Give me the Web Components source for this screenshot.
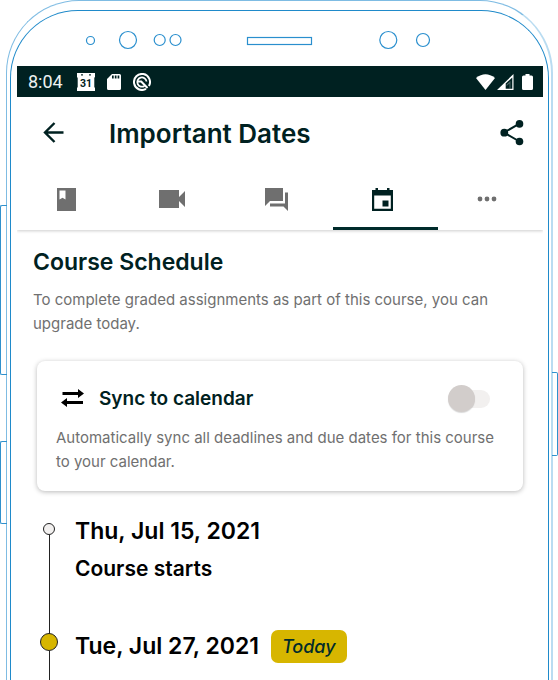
<!DOCTYPE html>
<html lang="en">
<head>
<meta charset="utf-8">
<title>Important Dates</title>
<style>
body { margin: 0; background: #fff; font-family: Inter, "Liberation Sans", sans-serif; color: #002121; overflow: hidden; }
</style>
</head>
<body>
<phone-frame>
  <status-bar></status-bar>
  <app-bar>Important Dates</app-bar>
  <tab-bar></tab-bar>
  <course-intro>
    <span slot="title">Course Schedule</span>
    To complete graded assignments as part of this course, you can upgrade today.
  </course-intro>
  <sync-card>
    <span slot="title">Sync to calendar</span>
    Automatically sync all deadlines and due dates for this course to your calendar.
  </sync-card>
  <date-timeline>
    <date-item>
      <span slot="date">Thu, Jul 15, 2021</span>
      Course starts
    </date-item>
    <date-item today>
      <span slot="date">Tue, Jul 27, 2021</span>
    </date-item>
  </date-timeline>
</phone-frame>

<script>
const define = (name, html) => {
  const template = document.createElement('template');
  template.innerHTML = html;
  customElements.define(name, class extends HTMLElement {
    constructor() {
      super();
      this.attachShadow({ mode: 'open' }).append(template.content.cloneNode(true));
    }
  });
};

define('phone-frame', `
<style>
:host { display: block; position: relative; padding: 0 5px 0 6px; height: 100vh; overflow: hidden; box-sizing: border-box; }
.outer { box-sizing: border-box; height: 100%; border: 1px solid #7fbce3; border-right: 2px solid #b9dcf1; border-bottom: 0; border-radius: 73px 73px 0 0; padding: 9px 2px 0 3px; }
.inner { box-sizing: border-box; height: 100%; border: 1px solid #1f8aca; border-bottom: 0; border-radius: 68px 68px 0 0; padding: 0 5px 0 6px; display: flex; flex-direction: column; }
.bezel { display: block; width: 100%; height: 55px; flex: none; }
.screen { flex: 1; display: flex; flex-direction: column; min-height: 0; }
.key { position: absolute; box-sizing: border-box; width: 7px; border: 1px solid #2f91cd; }
.left { left: 0; border-right: 0; border-radius: 2px 0 0 2px; }
.right { right: 0; width: 6px; border-left: 0; border-radius: 0 2px 2px 0; }
</style>
<div class="outer"><div class="inner">
  <svg class="bezel" viewBox="0 0 526 55" fill="none" stroke="#2a8fce" stroke-width="1.2" aria-hidden="true">
    <circle cx="73.5" cy="29.5" r="4"/><circle cx="111" cy="29" r="8.5"/>
    <circle cx="142.700" cy="29" r="5.5"/><circle cx="158.500" cy="29" r="5.5"/>
    <rect x="230.500" y="26.500" width="64" height="7"/>
    <circle cx="371.300" cy="29" r="8.5"/><circle cx="406" cy="29" r="6.500"/>
  </svg>
  <div class="screen"><slot></slot></div>
</div></div>
<div class="key left" style="top:205px;height:170px"></div>
<div class="key left" style="top:441px;height:83px"></div>
<div class="key right" style="top:372px;height:84px"></div>`);

define('status-bar', `
<style>
:host { display: flex; align-items: center; height: 31px; flex: none; background: #002121; color: #fff; padding: 0 10px 0 11px; font: 18px/32px Roboto, sans-serif; }
svg { display: block; fill: #fff; }
.left { display: flex; align-items: center; gap: 12px; flex: 1; }
time { margin-right: 2px; color: #eef1f1; }
.right { display: flex; align-items: center; gap: 2px; }
.bat { margin-left: 6px; }
</style>
<div class="left">
  <time>8:04</time>
  <svg width="18" height="18" viewBox="0 0 18 18"><path d="M0 0h18v4l-.7.800V14l.7.900V18H0v-3l.7-1V5L0 4z"/><circle cx="5" cy="1.800" r=".9" fill="#002121"/><circle cx="13" cy="1.800" r=".9" fill="#002121"/><text x="9" y="14" font-family="Roboto" font-size="10.500" font-weight="700" text-anchor="middle" fill="#002121">31</text></svg>
  <svg width="14" height="16" viewBox="0 0 14 16"><path fill-rule="evenodd" d="M5 0h7.500Q14 0 14 1.500v13q0 1.500-1.500 1.500h-11Q0 16 0 14.500V5zM5 1.500v3h1.700v-3zM7.800 1.500v3h1.700v-3zM10.600 1.500v3h1.700v-3z"/></svg>
  <svg width="18" height="18" viewBox="0 0 18 18" style="fill:none;stroke:#fff"><path stroke-width="2" d="M15.900 13A8 8 0 1 0 13 15.900"/><path stroke-width="1.800" d="M11.500 12.900A4.600 4.600 0 1 1 13.500 8.500"/><path stroke-width="2" d="M5 8.500h3.200L14.500 15"/></svg>
</div>
<div class="right">
  <svg width="19" height="16" viewBox="0 0 19 16"><path d="M0 4Q9.500-3.500 19 4L9.500 16z"/></svg>
  <svg width="17" height="16" viewBox="0 0 17 16"><path fill-rule="evenodd" d="M0 16L16.500 0v16zM15.300 3.500L8.700 9.500v5.300h6.600z"/><path d="M9.500 10.500l4-3.500v7.500h-1V9.500l-3 2.500z" opacity=".3"/></svg>
  <svg class="bat" width="11" height="16" viewBox="0 0 11 16"><path d="M3.500 0h4v1.500h2Q11 1.500 11 3v11.500q0 1.500-1.500 1.500h-8Q0 16 0 14.500V3q0-1.500 1.500-1.500h2z"/></svg>
</div>`);

define('app-bar', `
<style>
:host { display: flex; align-items: center; height: 72px; flex: none; padding: 0 18px 0 23px; }
button { border: 0; padding: 0; background: none; color: #002b2b; display: block; }
svg { display: block; }
h1 { flex: 1; margin: 0 0 0 41px; font-size: 26px; line-height: 34px; padding-top: 2px; font-weight: 600; white-space: nowrap; }
</style>
<button aria-label="Back"><svg width="28" height="28" viewBox="0 0 28 28" fill="none" stroke="#002121" stroke-width="2.400"><path d="M23.500 13.500H5.500M14.500 4L5 13.500l9.500 9.500"/></svg></button>
<h1><slot></slot></h1>
<button aria-label="Share"><svg width="26" height="28" viewBox="0 0 26 28" fill="#002121"><path d="M20.500 4.700L5 13.500l15.500 9" fill="none" stroke="#002121" stroke-width="2"/><circle cx="20.500" cy="4.900" r="3.800"/><circle cx="5.300" cy="13.700" r="3.900"/><circle cx="20.500" cy="22.500" r="3.800"/></svg></button>`);

define('tab-bar', `
<style>
:host { display: block; flex: none; }
nav { display: grid; grid-template-columns: repeat(5, 1fr); height: 61px; box-shadow: 0 1px 3px rgba(0,0,0,.2); clip-path: inset(0 0 -6px 0); }
button { display: flex; justify-content: center; align-items: center; border: 0; border-bottom: 3px solid transparent; background: none; padding: 2px 0 0; margin: 0; color: #6f6f6f; }
.on { border-bottom-color: #002b2b; color: #002121; }
svg { display: block; fill: currentColor; margin-left: -6px; }
</style>
<nav>
  <button aria-label="Course"><svg width="19" height="23" viewBox="0 0 19 23"><path fill-rule="evenodd" d="M0 0h19v23H0zM2.500 2.500v9l3-1.700 3 1.700v-9z"/></svg></button>
  <button aria-label="Videos"><svg width="26" height="18" viewBox="0 0 26 18"><path d="M0 0h20v7l6-6v16l-6-6v7H0z"/></svg></button>
  <button aria-label="Discussion"><svg width="23" height="23" viewBox="0 0 23 23"><path d="M0 0h18v13H5l-5 5zM20 4.500h3V23l-4.500-4.500H5v-3h15z"/></svg></button>
  <button class="on" aria-label="Dates" aria-current="page"><svg width="21" height="23" viewBox="0 0 21 23"><path fill-rule="evenodd" d="M3.500 0h2.500v2h9V0h2.500v2H21v21H0V2h3.500zM2.200 7.500v13.300h16.600V7.500z"/><path d="M10.500 12.500h6v6h-6z"/></svg></button>
  <button class="more" aria-label="More"><svg width="20" height="6" viewBox="0 0 20 6"><circle cx="3" cy="3" r="2.400"/><circle cx="10" cy="3" r="2.400"/><circle cx="17" cy="3" r="2.400"/></svg></button>
</nav>`);

define('course-intro', `
<style>
:host { display: block; flex: none; padding: 16px 16px 25px; }
h2 { margin: 0 0 10px; font-size: 23px; line-height: 32px; font-weight: 600; }
p { margin: 0; font-size: 15px; line-height: 24px; color: #707070; }
</style>
<h2><slot name="title"></slot></h2><p><slot></slot></p>`);

define('sync-card', `
<style>
:host { display: block; flex: none; margin: 0 20px; padding: 22px 16px 17px 19px; border-radius: 8px; background: #fff; box-shadow: 0 1px 5px rgba(0,0,0,.28); }
label { display: flex; align-items: center; height: 32px; margin-bottom: 11px; }
svg { display: block; margin: 0 14px 0 5px; }
.name { flex: 1; font-size: 19px; line-height: 32px; font-weight: 600; }
input { appearance: none; position: relative; margin: 0 17px 0 0; width: 36px; height: 18px; border-radius: 9px; background: #f2f0ef; }
input::before { content: ""; position: absolute; left: -6px; top: -5px; width: 27px; height: 27px; border-radius: 50%; background: #d2cdcb; box-shadow: 0 1px 1px rgba(0,0,0,.15); }
input:checked::before { left: 16px; background: #002121; }
p { margin: 0; font-size: 15px; line-height: 24px; color: #707070; }
</style>
<label>
  <svg width="24" height="20" viewBox="0 0 24 20" fill="#000" aria-hidden="true"><path d="M1.500 3H17V0l6 4.500L17 9V6H1.500zM22 12H6V9L0 13.500 6 18v-3h16z"/></svg>
  <span class="name"><slot name="title"></slot></span>
  <input type="checkbox" role="switch">
</label>
<p><slot></slot></p>`);

define('date-timeline', `
<style>:host { display: block; flex: none; padding: 23px 16px 0 23px; color: #000; }</style><slot></slot>`);

define('date-item', `
<style>
:host { display: grid; grid-template-columns: 18px 1fr; column-gap: 17px; min-height: 115px; }
.rail { display: flex; flex-direction: column; align-items: center; margin: 9px 0 -10px; }
.dot { box-sizing: border-box; width: 12px; height: 12px; border: 1px solid #222; border-radius: 50%; background: #f2f0ef; flex: none; }
.line { width: 1px; flex: 1; background: #222; }
.row { display: flex; align-items: center; gap: 12px; height: 34px; }
h3 { margin: 0; font-size: 23px; line-height: 32px; font-weight: 600; white-space: nowrap; }
p { margin: 5px 0 0; font-size: 21px; line-height: 32px; font-weight: 600; }
.badge { display: none; padding: 0 11px; border-radius: 7px; background: #d7b600; color: #002b2b; font-size: 18px; line-height: 33px; font-weight: 500; font-style: italic; }
:host([today]) .badge { display: block; }
:host([today]) .rail { margin-top: 4px; }
:host([today]) .dot { width: 18px; height: 18px; background: #d7b600; }
</style>
<div class="rail"><span class="dot"></span><span class="line"></span></div>
<div><div class="row"><h3><slot name="date"></slot></h3><span class="badge">Today</span></div><p><slot></slot></p></div>`);
</script>
</body>
</html>
